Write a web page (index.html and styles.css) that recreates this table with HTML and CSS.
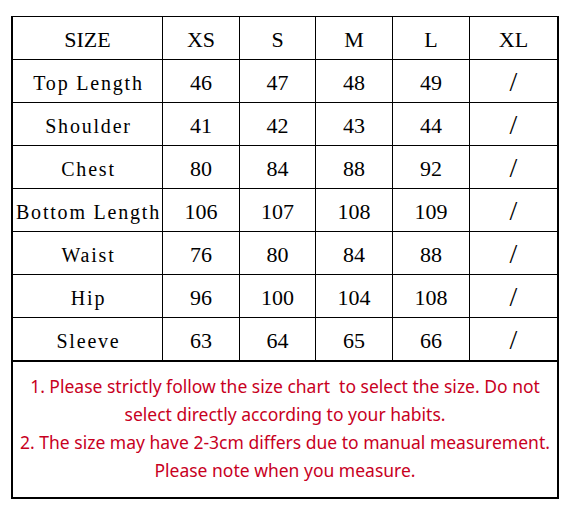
FILE: index.html
```html
<!DOCTYPE html>
<html>
<head>
<meta charset="utf-8">
<link rel="stylesheet" href="styles.css">
</head>
<body>
<div class="chart">
  <div class="grid">
    <div class="cell head">SIZE</div>
    <div class="cell head">XS</div>
    <div class="cell head">S</div>
    <div class="cell head">M</div>
    <div class="cell head">L</div>
    <div class="cell head">XL</div>

    <div class="cell label">Top Length</div>
    <div class="cell num">46</div><div class="cell num">47</div><div class="cell num">48</div><div class="cell num">49</div><div class="cell na">/</div>

    <div class="cell label">Shoulder</div>
    <div class="cell num">41</div><div class="cell num">42</div><div class="cell num">43</div><div class="cell num">44</div><div class="cell na">/</div>

    <div class="cell label">Chest</div>
    <div class="cell num">80</div><div class="cell num">84</div><div class="cell num">88</div><div class="cell num">92</div><div class="cell na">/</div>

    <div class="cell label">Bottom Length</div>
    <div class="cell num">106</div><div class="cell num">107</div><div class="cell num">108</div><div class="cell num">109</div><div class="cell na">/</div>

    <div class="cell label">Waist</div>
    <div class="cell num">76</div><div class="cell num">80</div><div class="cell num">84</div><div class="cell num">88</div><div class="cell na">/</div>

    <div class="cell label">Hip</div>
    <div class="cell num">96</div><div class="cell num">100</div><div class="cell num">104</div><div class="cell num">108</div><div class="cell na">/</div>

    <div class="cell label">Sleeve</div>
    <div class="cell num">63</div><div class="cell num">64</div><div class="cell num">65</div><div class="cell num">66</div><div class="cell na">/</div>
  </div>
  <div class="notes">
    <p>1. Please strictly follow the size chart&nbsp; to select the size. Do not select directly according to your habits.</p>
    <p>2. The size may have 2-3cm differs due to manual measurement. Please note when you measure.</p>
  </div>
</div>
</body>
</html>
```
FILE: styles.css
```css
html, body {
  margin: 0;
  padding: 0;
  background: #fff;
}
.chart {
  margin: 16px 0 0 11px;
  width: 544px;
  border-top: 1px solid #000;
  border-left: 2px solid #000;
  border-right: 2px solid #000;
  border-bottom: 2px solid #000;
  background: #fff;
}
.grid {
  display: grid;
  grid-template-columns: 149px 76px 75px 76px 76px 87px;
  grid-auto-rows: 42px;
  gap: 1px;
  background: #000;
  border-bottom: 2px solid #000;
}
.cell {
  background: #fff;
  display: flex;
  align-items: center;
  justify-content: center;
  padding-top: 4px;
  box-sizing: border-box;
  color: #000;
  white-space: nowrap;
}
.head, .num, .na {
  font-family: "Liberation Serif", "Times New Roman", serif;
  font-size: 22px;
}
.na {
  font-size: 28px;
  font-weight: 300;
  padding-top: 2px;
}
.label {
  font-family: "Liberation Serif", "Times New Roman", serif;
  font-size: 20px;
  letter-spacing: 1.8px;
  text-indent: 2px;
}
.notes {
  padding: 10px 2px 13px;
  text-align: center;
  font-family: "Noto Sans", "Open Sans", sans-serif;
  font-size: 17.5px;
  line-height: 28px;
  color: #c8001e;
}
.notes p {
  margin: 0;
}
```
